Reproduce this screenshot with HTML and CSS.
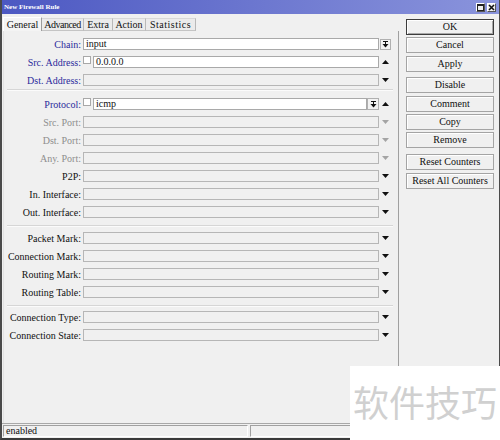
FILE: index.html
```html
<!DOCTYPE html>
<html>
<head>
<meta charset="utf-8">
<link rel="stylesheet" href="styles.css">
</head>
<body>
<div class="window">
  <div class="titlebar">
    <span class="title">New Firewall Rule</span>
    <div class="tbtns">
      <span class="tbtn"><svg width="7" height="7" viewBox="0 0 7 7"><rect x="0.5" y="0.5" width="6" height="6" fill="none" stroke="#222"/><rect x="0" y="0" width="7" height="2" fill="#222"/></svg></span>
      <span class="tbtn"><svg width="7" height="7" viewBox="0 0 7 7"><path d="M1 1L6 6M6 1L1 6" stroke="#111" stroke-width="1.6"/></svg></span>
    </div>
  </div>
  <div class="main">
    <div class="left">
      <div class="tabs">
        <span class="tab active t1">General</span>
        <span class="tab t2">Advanced</span>
        <span class="tab t3">Extra</span>
        <span class="tab t4">Action</span>
        <span class="tab t5">Statistics</span>
      </div>
      <div class="panel">
        <div class="row">
          <span class="lbl blue">Chain:</span>
          <div class="ctl"><div class="field on">input</div></div>
          <div class="slot"><span class="cbtn"><svg width="7" height="7" viewBox="0 0 7 7"><path d="M1 0.5H6" stroke="#111"/><rect x="3" y="1" width="1" height="2" fill="#111"/><path d="M0.5 3H6.5L3.5 6.5Z" fill="#111"/></svg></span></div>
        </div>
        <div class="row">
          <span class="lbl blue">Src. Address:</span>
          <div class="ctl"><span class="cb"></span><div class="field on">0.0.0.0</div></div>
          <div class="slot"><svg width="7" height="4" viewBox="0 0 7 4"><path d="M0 4H7L3.5 0Z" fill="#111"/></svg></div>
        </div>
        <div class="row">
          <span class="lbl blue">Dst. Address:</span>
          <div class="ctl"><div class="field"></div></div>
          <div class="slot"><svg width="7" height="4" viewBox="0 0 7 4"><path d="M0 0H7L3.5 4Z" fill="#111"/></svg></div>
        </div>
        <div class="sep sep-a"></div>
        <div class="row">
          <span class="lbl blue">Protocol:</span>
          <div class="ctl"><span class="cb"></span><div class="field on">icmp</div><span class="cbtn inl"><svg width="7" height="7" viewBox="0 0 7 7"><path d="M1 0.5H6" stroke="#111"/><rect x="3" y="1" width="1" height="2" fill="#111"/><path d="M0.5 3H6.5L3.5 6.5Z" fill="#111"/></svg></span></div>
          <div class="slot"><svg width="7" height="4" viewBox="0 0 7 4"><path d="M0 4H7L3.5 0Z" fill="#111"/></svg></div>
        </div>
        <div class="row">
          <span class="lbl dis">Src. Port:</span>
          <div class="ctl"><div class="field"></div></div>
          <div class="slot"><svg width="7" height="4" viewBox="0 0 7 4"><path d="M0 0H7L3.5 4Z" fill="#a4a4a4"/></svg></div>
        </div>
        <div class="row">
          <span class="lbl dis">Dst. Port:</span>
          <div class="ctl"><div class="field"></div></div>
          <div class="slot"><svg width="7" height="4" viewBox="0 0 7 4"><path d="M0 0H7L3.5 4Z" fill="#a4a4a4"/></svg></div>
        </div>
        <div class="row">
          <span class="lbl dis">Any. Port:</span>
          <div class="ctl"><div class="field"></div></div>
          <div class="slot"><svg width="7" height="4" viewBox="0 0 7 4"><path d="M0 0H7L3.5 4Z" fill="#a4a4a4"/></svg></div>
        </div>
        <div class="row">
          <span class="lbl">P2P:</span>
          <div class="ctl"><div class="field"></div></div>
          <div class="slot"><svg width="7" height="4" viewBox="0 0 7 4"><path d="M0 0H7L3.5 4Z" fill="#111"/></svg></div>
        </div>
        <div class="row">
          <span class="lbl">In. Interface:</span>
          <div class="ctl"><div class="field"></div></div>
          <div class="slot"><svg width="7" height="4" viewBox="0 0 7 4"><path d="M0 0H7L3.5 4Z" fill="#111"/></svg></div>
        </div>
        <div class="row">
          <span class="lbl">Out. Interface:</span>
          <div class="ctl"><div class="field"></div></div>
          <div class="slot"><svg width="7" height="4" viewBox="0 0 7 4"><path d="M0 0H7L3.5 4Z" fill="#111"/></svg></div>
        </div>
        <div class="sep sep-b"></div>
        <div class="row">
          <span class="lbl">Packet Mark:</span>
          <div class="ctl"><div class="field"></div></div>
          <div class="slot"><svg width="7" height="4" viewBox="0 0 7 4"><path d="M0 0H7L3.5 4Z" fill="#111"/></svg></div>
        </div>
        <div class="row">
          <span class="lbl">Connection Mark:</span>
          <div class="ctl"><div class="field"></div></div>
          <div class="slot"><svg width="7" height="4" viewBox="0 0 7 4"><path d="M0 0H7L3.5 4Z" fill="#111"/></svg></div>
        </div>
        <div class="row">
          <span class="lbl">Routing Mark:</span>
          <div class="ctl"><div class="field"></div></div>
          <div class="slot"><svg width="7" height="4" viewBox="0 0 7 4"><path d="M0 0H7L3.5 4Z" fill="#111"/></svg></div>
        </div>
        <div class="row">
          <span class="lbl">Routing Table:</span>
          <div class="ctl"><div class="field"></div></div>
          <div class="slot"><svg width="7" height="4" viewBox="0 0 7 4"><path d="M0 0H7L3.5 4Z" fill="#111"/></svg></div>
        </div>
        <div class="sep sep-c"></div>
        <div class="row">
          <span class="lbl">Connection Type:</span>
          <div class="ctl"><div class="field"></div></div>
          <div class="slot"><svg width="7" height="4" viewBox="0 0 7 4"><path d="M0 0H7L3.5 4Z" fill="#111"/></svg></div>
        </div>
        <div class="row">
          <span class="lbl">Connection State:</span>
          <div class="ctl"><div class="field"></div></div>
          <div class="slot"><svg width="7" height="4" viewBox="0 0 7 4"><path d="M0 0H7L3.5 4Z" fill="#111"/></svg></div>
        </div>
      </div>
    </div>
    <div class="side">
      <div class="btn default">OK</div>
      <div class="btn">Cancel</div>
      <div class="btn">Apply</div>
      <div class="bgap"></div>
      <div class="btn">Disable</div>
      <div class="btn">Comment</div>
      <div class="btn">Copy</div>
      <div class="btn">Remove</div>
      <div class="bgap"></div>
      <div class="btn">Reset Counters</div>
      <div class="btn">Reset All Counters</div>
    </div>
  </div>
  <div class="status">
    <div class="cell first">enabled</div>
    <div class="cell rest"></div>
  </div>
</div>
<div class="wm">软件技巧</div>
</body>
</html>
```
FILE: styles.css
```css
* { box-sizing: border-box; margin: 0; padding: 0; }
html, body { width: 500px; height: 440px; overflow: hidden; }
body {
  position: relative;
  background: #f0f0f0;
  font-family: "Liberation Serif", serif;
  font-size: 10px;
  color: #111;
}
.window {
  width: 500px;
  height: 440px;
  display: flex;
  flex-direction: column;
  border-left: 2px solid #4a4a4a;
  border-right: 1px solid #4a4a4a;
  border-bottom: 2px solid #3a3a3a;
  background: #f0f0f0;
}
.titlebar {
  height: 14px;
  flex: none;
  display: flex;
  align-items: center;
  justify-content: space-between;
  padding: 0 3px 0 2px;
  background: linear-gradient(90deg, #4c58c2, #8a94dc);
  color: #fff;
}
.title { font-weight: bold; font-size: 7px; letter-spacing: 0; }
.tbtns { display: flex; gap: 2px; }
.tbtn {
  width: 9px; height: 9px;
  display: flex; align-items: center; justify-content: center;
  background: #eeeeee;
  border: 1px solid #fff;
  border-right-color: #555;
  border-bottom-color: #555;
}
.main { flex: 1; display: flex; min-height: 0; }
.left {
  width: 397px;
  flex: none;
  padding: 3px 0 0 1px;
  display: flex;
  flex-direction: column;
}
.tabs { display: flex; height: 14px; align-items: flex-end; flex: none; }
.tab {
  height: 13px;
  line-height: 12px;
  text-align: center;
  white-space: nowrap;
  background: #ebebeb;
  border-top: 1px solid #d8d8d8;
  border-right: 1px solid #b8b8b8;
  border-bottom: 1px solid #c4c4c4;
}
.t1 { width: 39px; }
.t2 { width: 42px; letter-spacing: -0.5px; }
.t3 { width: 29px; }
.t4 { width: 33px; }
.t5 { width: 50px; letter-spacing: 0.5px; }
.tab.active {
  height: 14px;
  line-height: 13px;
  background: #f4f4f4;
  border-top: 1px solid #fff;
  border-left: 1px solid #fff;
  border-right: 1px solid #9c9c9c;
  border-bottom: none;
}
.panel {
  flex: 1;
  border-left: 1px solid #e2e2e2;
  border-right: 1px solid #a0a0a0;
  padding-top: 4px;
}
.row { display: flex; align-items: center; height: 18px; }
.lbl { width: 77px; margin-right: 2px; text-align: right; white-space: nowrap; color: #111; }
.lbl.blue { color: #2b2b9c; }
.lbl.dis { color: #8e8e8e; }
.ctl { width: 296px; height: 12px; display: flex; }
.field {
  flex: 1;
  height: 12px;
  border: 1px solid #b6b6b6;
  background: #f0f0f0;
  padding-left: 2px;
  line-height: 10px;
  white-space: nowrap;
}
.field.on { background: #fff; border-color: #a9a9a9; }
.cb {
  width: 8px; height: 8px;
  margin-right: 2px;
  border: 1px solid #a8a8a8;
  background: #fff;
  flex: none;
}
.cbtn {
  width: 11px; height: 11px;
  display: flex; align-items: center; justify-content: center;
  border: 1px solid #b0b0b0;
  background: #f2f2f2;
  flex: none;
}
.cbtn.inl { width: 12px; height: 12px; }
.slot { width: 13px; display: flex; justify-content: center; align-items: center; }
.slot .cbtn { margin-right: 1px; }
.sep {
  margin: 0 5px 0 3px;
  border-top: 1px solid #d6d6d6;
  box-shadow: inset 0 1px 0 #fbfbfb;
}
.sep-a { height: 6px; }
.sep-b { height: 4px; margin-top: 4px; }
.sep-c { height: 3px; margin-top: 4px; }
.side {
  flex: 1;
  padding: 5px 0 0 7px;
  display: flex;
  flex-direction: column;
}
.btn {
  width: 88px;
  height: 16px;
  flex: none;
  margin-bottom: 2.3px;
  border: 1px solid #a4a4a4;
  box-shadow: inset 1px 1px 0 #fff;
  background: #f0f0f0;
  text-align: center;
  line-height: 14px;
  white-space: nowrap;
}
.btn.default { border-color: #3c3c3c; box-shadow: inset 1px 1px 0 #fff, inset -1px -1px 0 #a8a8a8; }
.bgap { height: 3.6px; flex: none; }
.status {
  height: 15px;
  flex: none;
  display: flex;
  gap: 2px;
  padding: 1px 0 0 1px;
  border-top: 1px solid #a8a8a8;
}
.cell {
  height: 12px;
  border: 1px solid;
  border-color: #a0a0a0 #fff #fff #a0a0a0;
  padding-left: 2px;
  line-height: 10px;
}
.cell.first { width: 245px; }
.cell.rest { flex: 1; }
.wm {
  position: absolute;
  left: 350px;
  top: 366px;
  width: 150px;
  height: 74px;
  background: #fff;
  font-family: "Noto Sans CJK SC", sans-serif;
  font-size: 36px;
  line-height: 1;
  color: #d0d0d0;
  text-align: center;
  padding-top: 17px;
}
```
